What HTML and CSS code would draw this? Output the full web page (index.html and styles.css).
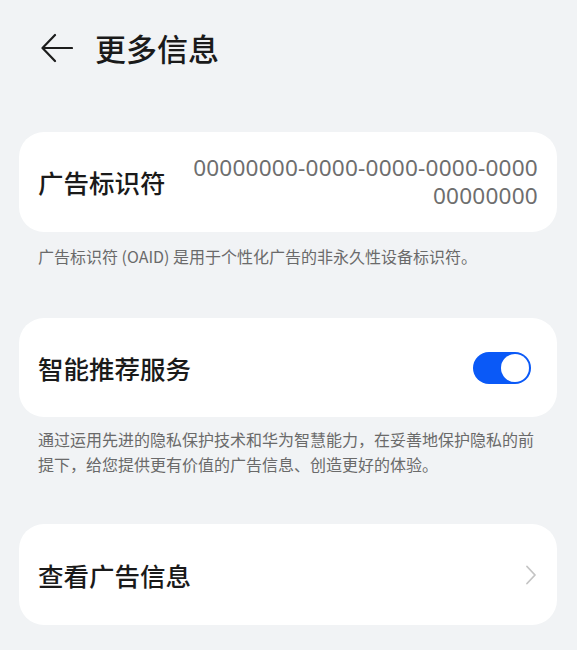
FILE: index.html
```html
<!DOCTYPE html>
<html lang="zh-CN">
<head>
<meta charset="utf-8">
<title>更多信息</title>
<link rel="stylesheet" href="styles.css">
</head>
<body>
<div class="page">
  <header class="header">
    <svg class="back" width="32" height="30" viewBox="0 0 32 30" aria-hidden="true">
      <path d="M31 15 H2 M14 2 L1.5 15 L14 28" fill="none" stroke="#1c1c1c" stroke-width="2.2" stroke-linecap="round" stroke-linejoin="round"/>
    </svg>
    <h1 class="title">更多信息</h1>
  </header>

  <section class="card card-oaid">
    <div class="label">广告标识符</div>
    <div class="value">00000000-0000-0000-0000-0000<br>00000000</div>
  </section>
  <p class="caption caption-1">广告标识符 (OAID) 是用于个性化广告的非永久性设备标识符。</p>

  <section class="card card-switch">
    <div class="label">智能推荐服务</div>
    <div class="toggle"><span class="knob"></span></div>
  </section>
  <p class="caption caption-2">通过运用先进的隐私保护技术和华为智慧能力，在妥善地保护隐私的前<br>提下，给您提供更有价值的广告信息、创造更好的体验。</p>

  <section class="card card-link">
    <div class="label">查看广告信息</div>
    <svg class="chev" width="12" height="20" viewBox="0 0 12 20" aria-hidden="true">
      <path d="M2 1.5 L10 10 L2 18.5" fill="none" stroke="#c4c4c4" stroke-width="1.8" stroke-linecap="round" stroke-linejoin="round"/>
    </svg>
  </section>
</div>
</body>
</html>
```

FILE: styles.css
```css
* { box-sizing: border-box; }
html, body { margin: 0; padding: 0; }
body {
  background: #f1f3f5;
  font-family: "Noto Sans CJK SC", "Noto Sans", sans-serif;
  color: #191919;
}
.page {
  width: 577px;
  padding: 0 20px 0 19px;
}
.header {
  height: 96px;
  display: flex;
  align-items: center;
  padding-left: 22px;
  margin-bottom: 36px;
}
.back { flex: none; }
.title {
  margin: 0 0 0 22px;
  font-size: 31px;
  font-weight: 500;
  line-height: 40px;
  color: #1a1a1a;
}
.card {
  background: #ffffff;
  border-radius: 25px;
  display: flex;
  align-items: center;
  justify-content: space-between;
  padding: 0 19px;
  height: 100px;
}
.label {
  font-size: 25.5px;
  font-weight: 500;
  line-height: 34px;
  color: #1a1a1a;
  white-space: nowrap;
}
.value {
  font-family: "Noto Sans", sans-serif;
  font-size: 22.6px;
  line-height: 28px;
  color: #6e6e6e;
  text-align: right;
  letter-spacing: 0.2px;
}
.caption {
  margin: 0;
  padding: 0 0 0 19px;
  font-size: 16px;
  line-height: 25px;
  color: #6a6a6a;
  white-space: nowrap;
}
.caption-1 { margin-top: 12px; margin-bottom: 49px; }
.caption-2 { margin-top: 10px; margin-bottom: 47px; }
.card-switch { height: 99px; }
.toggle {
  width: 58px;
  height: 32px;
  border-radius: 16px;
  background: #0a59f7;
  position: relative;
  margin-right: 7px;
}
.knob {
  position: absolute;
  right: 2px;
  top: 2px;
  width: 28px;
  height: 28px;
  border-radius: 50%;
  background: #ffffff;
}
.card-link { height: 101px; }
.chev { margin-right: 1px; }
```
